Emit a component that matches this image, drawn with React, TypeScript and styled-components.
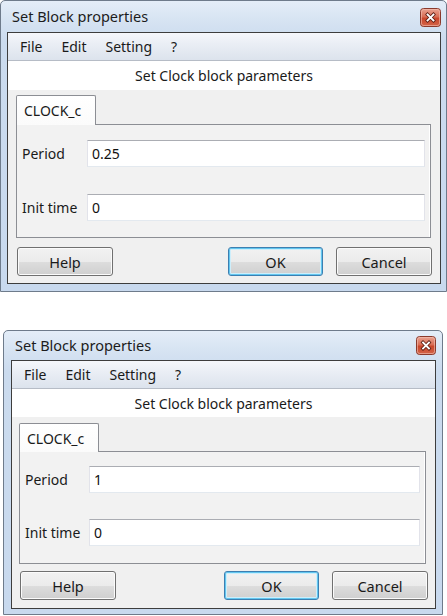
import React from "react";
import styled, { createGlobalStyle, css } from "styled-components";

type Metrics = {
  w: number;
  left: number;
  titleH: number;
  padL: number;
  padR: number;
  padB: number;
  closeTop: number;
  closeR: number;
  closeW: number;
  closeH: number;
  headerH: number;
  tabTop: number;
  tabH: number;
  panelML: number;
  panelMR: number;
  panelPT: number;
  panelPB: number;
  rowGap: number;
  btnGap: number;
  btnPadB: number;
  helpL: number;
  cancelR: number;
  labelW: number;
};

const m1: Metrics = {
  w: 447,
  left: 0,
  titleH: 31,
  padL: 6,
  padR: 5,
  padB: 7,
  closeTop: 7,
  closeR: 5,
  closeW: 21,
  closeH: 19,
  headerH: 29,
  tabTop: 5,
  tabH: 29,
  panelML: 8,
  panelMR: 9,
  panelPT: 15,
  panelPB: 16,
  rowGap: 27,
  btnGap: 9,
  btnPadB: 7,
  helpL: 9,
  cancelR: 8,
  labelW: 70,
};

const m2: Metrics = {
  w: 440,
  left: 3,
  titleH: 29,
  padL: 7,
  padR: 6,
  padB: 5,
  closeTop: 5,
  closeR: 6,
  closeW: 20,
  closeH: 19,
  headerH: 28,
  tabTop: 6,
  tabH: 28,
  panelML: 7,
  panelMR: 9,
  panelPT: 14,
  panelPB: 17,
  rowGap: 26,
  btnGap: 7,
  btnPadB: 8,
  helpL: 8,
  cancelR: 7,
  labelW: 69,
};

const GlobalStyle = createGlobalStyle`
  html, body {
    margin: 0;
    padding: 0;
    background: #ffffff;
  }
  body {
    font-family: "Noto Sans", "Open Sans", sans-serif;
    font-size: 14px;
    color: #111;
  }
`;

const Page = styled.div`
  display: flex;
  flex-direction: column;
  align-items: flex-start;
  gap: 38px;
`;

const Window = styled.div<{ $m: Metrics }>`
  box-sizing: border-box;
  width: ${(p) => p.$m.w}px;
  margin-left: ${(p) => p.$m.left}px;
  border: 1px solid #6e7b8b;
  border-radius: 5px 5px 0 0;
  background: linear-gradient(
    to bottom,
    #e4edf8 0px,
    #d6e3f2 20px,
    #cbdbee 40px,
    #c8d9ee 100%
  );
  padding: 0 ${(p) => p.$m.padR}px ${(p) => p.$m.padB}px ${(p) => p.$m.padL}px;
  display: flex;
  flex-direction: column;
`;

const TitleBar = styled.div<{ $m: Metrics }>`
  height: ${(p) => p.$m.titleH}px;
  display: flex;
  justify-content: space-between;
  align-items: flex-start;
  margin-left: ${(p) => 5 - p.$m.padL + 6}px;
  margin-right: ${(p) => p.$m.closeR - p.$m.padR}px;
`;

const TitleText = styled.span<{ $m: Metrics }>`
  font-size: 14.5px;
  line-height: ${(p) => p.$m.titleH}px;
  color: #1c1c1c;
  white-space: nowrap;
`;

const CloseBox = styled.div<{ $m: Metrics }>`
  margin-top: ${(p) => p.$m.closeTop}px;
  width: ${(p) => p.$m.closeW}px;
  height: ${(p) => p.$m.closeH}px;
  display: flex;
`;

const Client = styled.div`
  border: 1px solid #3d3d3d;
  background: #f0f0f0;
  display: flex;
  flex-direction: column;
`;

const MenuBar = styled.div`
  height: 27px;
  border-bottom: 1px solid #b6bcc6;
  background: linear-gradient(to bottom, #f5f7fb 0%, #eaeef5 40%, #dce3ed 100%);
  display: flex;
  align-items: center;
  gap: 19px;
  padding-left: 12px;
`;

const MenuItem = styled.span`
  font-size: 14px;
  color: #1a1a1a;
  line-height: 27px;
`;

const Header = styled.div<{ $m: Metrics }>`
  height: ${(p) => p.$m.headerH}px;
  background: #ffffff;
  display: flex;
  align-items: center;
  justify-content: center;
  font-size: 14px;
  color: #1a1a1a;
`;

const Body = styled.div<{ $m: Metrics }>`
  padding-top: ${(p) => p.$m.tabTop}px;
  padding-bottom: ${(p) => p.$m.btnPadB}px;
  display: flex;
  flex-direction: column;
`;

const TabStrip = styled.div<{ $m: Metrics }>`
  display: flex;
  margin-left: ${(p) => p.$m.panelML}px;
  margin-right: ${(p) => p.$m.panelMR}px;
  position: relative;
  z-index: 1;
  margin-bottom: -1px;
`;

const Tab = styled.div<{ $m: Metrics }>`
  box-sizing: border-box;
  width: 80px;
  height: ${(p) => p.$m.tabH + 1}px;
  border: 1px solid #8c8e94;
  border-bottom: none;
  border-radius: 2px 2px 0 0;
  background: linear-gradient(to bottom, #ffffff, #fbfbfb);
  padding-left: 7px;
  display: flex;
  align-items: center;
  font-size: 14px;
  color: #1a1a1a;
`;

const Panel = styled.div<{ $m: Metrics }>`
  margin-left: ${(p) => p.$m.panelML}px;
  margin-right: ${(p) => p.$m.panelMR}px;
  border: 1px solid #8c8e94;
  box-shadow: inset -1px 0 0 #ffffff;
  background: #f2f2f2;
  padding: ${(p) => p.$m.panelPT}px 5px ${(p) => p.$m.panelPB}px 0;
  display: flex;
  flex-direction: column;
  gap: ${(p) => p.$m.rowGap}px;
`;

const FieldRow = styled.div<{ $m: Metrics }>`
  display: grid;
  grid-template-columns: ${(p) => p.$m.labelW}px 1fr;
  align-items: center;
`;

const Label = styled.span`
  padding-left: 5px;
  font-size: 14px;
  color: #1a1a1a;
  white-space: nowrap;
`;

const Field = styled.div`
  box-sizing: border-box;
  height: 27px;
  background: #ffffff;
  border: 1px solid #e2e3ea;
  border-top-color: #abadb3;
  border-bottom-color: #e3e9ef;
  padding-left: 4px;
  display: flex;
  align-items: center;
  font-size: 14px;
  color: #111;
`;

const ButtonRow = styled.div<{ $m: Metrics }>`
  margin-top: ${(p) => p.$m.btnGap}px;
  padding-left: ${(p) => p.$m.helpL}px;
  padding-right: ${(p) => p.$m.cancelR}px;
  display: flex;
  justify-content: space-between;
`;

const RightGroup = styled.div`
  display: flex;
  gap: 13px;
`;

const Button = styled.div<{ $default?: boolean; $w: number }>`
  box-sizing: border-box;
  width: ${(p) => p.$w}px;
  height: 29px;
  border-radius: 3px;
  border: 1px solid #707070;
  background: linear-gradient(
    to bottom,
    #f2f2f2 0%,
    #ebebeb 50%,
    #dddddd 51%,
    #cfcfcf 100%
  );
  box-shadow: inset 0 0 0 1px #fbfbfb;
  display: flex;
  align-items: center;
  justify-content: center;
  font-size: 14.5px;
  color: #1a1a1a;
  ${(p) =>
    p.$default &&
    css`
      border-color: #3c7fb1;
      box-shadow: inset 0 0 0 1px #62c6ef, inset 0 0 0 2px #cdeefb;
    `}
`;

const CloseIcon: React.FC<{ w: number; h: number; id: string }> = ({ w, h, id }) => (
  <svg width={w} height={h} viewBox={`0 0 ${w} ${h}`}>
    <defs>
      <linearGradient id={id} x1="0" y1="0" x2="0" y2="1">
        <stop offset="0" stopColor="#eaa594" />
        <stop offset="0.45" stopColor="#d96e55" />
        <stop offset="0.55" stopColor="#c9462b" />
        <stop offset="1" stopColor="#d4664a" />
      </linearGradient>
    </defs>
    <rect x="0.5" y="0.5" width={w - 1} height={h - 1} rx="3" fill={`url(#${id})`} stroke="#8a3a2c" />
    <rect x="1.5" y="1.5" width={w - 3} height={h - 3} rx="2" fill="none" stroke="#f3c2b4" strokeOpacity="0.6" />
    <g transform={`translate(${w / 2} ${h / 2})`}>
      <path d="M-3 -3 L3 3 M3 -3 L-3 3" stroke="#5a1d12" strokeWidth="3.4" strokeLinecap="square" />
      <path d="M-3 -3 L3 3 M3 -3 L-3 3" stroke="#ffffff" strokeWidth="1.8" strokeLinecap="square" />
    </g>
  </svg>
);

const Dialog: React.FC<{ m: Metrics; period: string; id: string }> = ({ m, period, id }) => (
  <Window $m={m}>
    <TitleBar $m={m}>
      <TitleText $m={m}>Set Block properties</TitleText>
      <CloseBox $m={m}>
        <CloseIcon w={m.closeW} h={m.closeH} id={id} />
      </CloseBox>
    </TitleBar>
    <Client>
      <MenuBar>
        <MenuItem>File</MenuItem>
        <MenuItem>Edit</MenuItem>
        <MenuItem>Setting</MenuItem>
        <MenuItem>?</MenuItem>
      </MenuBar>
      <Header $m={m}>Set Clock block parameters</Header>
      <Body $m={m}>
        <TabStrip $m={m}>
          <Tab $m={m}>CLOCK_c</Tab>
        </TabStrip>
        <Panel $m={m}>
          <FieldRow $m={m}>
            <Label>Period</Label>
            <Field>{period}</Field>
          </FieldRow>
          <FieldRow $m={m}>
            <Label>Init time</Label>
            <Field>0</Field>
          </FieldRow>
        </Panel>
        <ButtonRow $m={m}>
          <Button $w={96}>Help</Button>
          <RightGroup>
            <Button $w={95} $default>
              OK
            </Button>
            <Button $w={96}>Cancel</Button>
          </RightGroup>
        </ButtonRow>
      </Body>
    </Client>
  </Window>
);

export default function App() {
  return (
    <>
      <GlobalStyle />
      <Page>
        <Dialog m={m1} period="0.25" id="close1" />
        <Dialog m={m2} period="1" id="close2" />
      </Page>
    </>
  );
}
